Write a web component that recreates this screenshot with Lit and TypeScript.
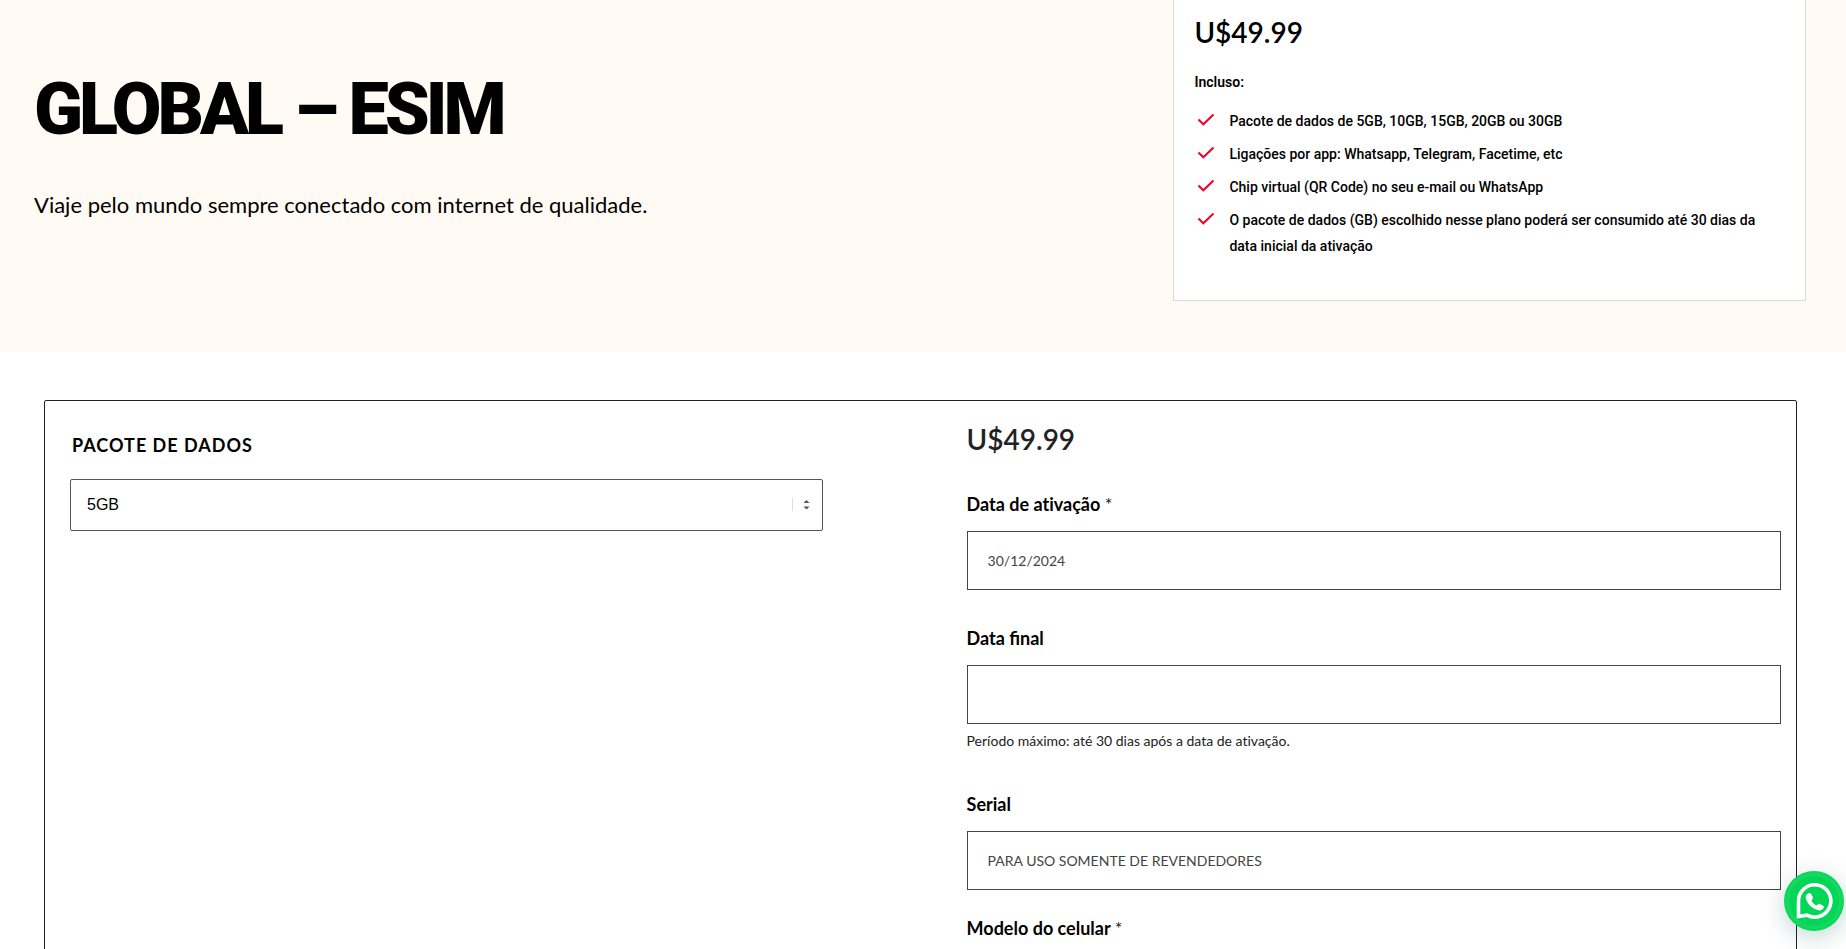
import { LitElement, html, css, nothing } from "lit";
import { customElement, property, state } from "lit/decorators.js";

@customElement("check-list")
class CheckList extends LitElement {
  @property({ attribute: false }) items: string[] = [];

  static styles = css`
    :host { display: block; }
    .list { list-style: none; margin: 0; padding: 0 0 0 3px; display: grid; gap: 7px; }
    .item { display: flex; gap: 14px; font: 500 14px/26px Roboto, sans-serif; color: #000; }
    .icon { flex: none; width: 18px; height: 18px; margin-top: 3px; }
  `;

  render() {
    return html`<ul class="list">
      ${this.items.map((text) => html`<li class="item">
        <svg class="icon" viewBox="0 0 18 18" aria-hidden="true">
          <path d="M1.500 8.500 6.300 13.300 16.500 3.500" fill="none" stroke="#f00027" stroke-width="2" />
        </svg>
        <span>${text}</span>
      </li>`)}
    </ul>`;
  }
}

@customElement("text-field")
class TextField extends LitElement {
  @property() label = "";
  @property() value = "";
  @property() placeholder = "";
  @property() hint = "";
  @property({ type: Boolean }) required = false;

  static styles = css`
    :host { display: block; font-family: Lato, sans-serif; }
    :host([required]) { font-variant-ligatures: none; }
    .label { display: block; font-size: 18px; line-height: 28px; font-weight: 700; color: #000; }
    .mark { font-weight: 400; color: #222; }
    .input {
      display: block; box-sizing: border-box; width: 100%; height: 59px; margin-top: 13px;
      padding: 0 20px; border: 1px solid #444; border-radius: 0; background: #fff;
      font: 400 14px/20px Lato, sans-serif; color: #444; outline: none;
    }
    .input::placeholder { color: #444; opacity: 1; }
    .hint { margin: 6px 0 0; font-size: 14px; line-height: 22px; font-variant-ligatures: none; color: #222; }
  `;

  render() {
    return html`
      <label class="label" for="field">${this.label}${this.required
        ? html` <span class="mark">*</span>` : nothing}</label>
      <input class="input" id="field" type="text" .value=${this.value}
        placeholder=${this.placeholder} ?required=${this.required} />
      ${this.hint ? html`<p class="hint">${this.hint}</p>` : nothing}
    `;
  }
}

@customElement("app-root")
class AppRoot extends LitElement {
  @state() private plan = "5GB";
  private plans = ["5GB", "10GB", "15GB", "20GB", "30GB"];
  private included = [
    "Pacote de dados de 5GB, 10GB, 15GB, 20GB ou 30GB",
    "Ligações por app: Whatsapp, Telegram, Facetime, etc",
    "Chip virtual (QR Code) no seu e-mail ou WhatsApp",
    "O pacote de dados (GB) escolhido nesse plano poderá ser consumido até 30 dias da data inicial da ativação",
  ];

  static styles = css`
    :host { display: block; height: 100vh; overflow: hidden; background: #fff; font-family: Lato, sans-serif; color: #000; }
    .hero { display: flex; justify-content: space-between; padding: 0 40px 50px 34px; background: #fffaf3; }
    .intro { padding-top: 54px; }
    .title { margin: 0; font: 900 72px/112px Roboto, sans-serif; letter-spacing: -4px; }
    .lead { margin: 22px 0 0; font-size: 22px; line-height: 34px; }
    .card {
      box-sizing: border-box; flex: 0 0 35.7%; padding: 12px 40px 41px 20px;
      border: 1px solid #d9d9de; border-top: 0; background: #fff;
    }
    .price { margin: 0; font-size: 28px; line-height: 40px; font-weight: 600; }
    .subtitle { margin: 17px 0 13px; font: 600 14px/26px Roboto, sans-serif; }
    .panel {
      display: grid; grid-template-columns: 44% 47.6%; justify-content: space-between; align-items: start;
      margin: 49px 49px 50px 44px; padding: 18px 15px 40px 25px; border: 1px solid #222; border-radius: 2px;
    }
    .data { padding-top: 12px; }
    .heading { display: block; padding-left: 2px; font-size: 18px; line-height: 28px; font-weight: 700; letter-spacing: 1px; }
    .picker { display: grid; align-items: center; margin-top: 20px; }
    .select {
      grid-area: 1 / 1; appearance: none; width: 100%; height: 52px; padding: 0 16px;
      border: 1px solid #555; border-radius: 2px; background: #fff;
      font: 400 16px/20px "Liberation Sans", sans-serif; color: #000; outline: none;
    }
    .arrows { grid-area: 1 / 1; justify-self: end; width: 18px; height: 14px; margin-right: 13px; pointer-events: none; }
    .order { display: grid; }
    .order .price { color: #222; }
    .first { margin-top: 31px; }
    .next { margin-top: 34px; }
    .after-hint { margin-top: 38px; }
    .last { margin-top: 24px; }
    .chat {
      position: fixed; right: 2px; bottom: 18px; width: 60px; height: 60px; border-radius: 50%;
      background: radial-gradient(circle, #00d757 0 56%, #1fd65f 62%, #00d757 70%);
      box-shadow: 0 6px 24px rgba(7, 94, 84, 0.24);
    }
    .chat-icon { display: block; width: 60px; height: 60px; }
  `;

  private choose(e: Event) {
    this.plan = (e.target as HTMLSelectElement).value;
  }

  render() {
    return html`
      <header class="hero">
        <div class="intro">
          <h1 class="title">GLOBAL – ESIM</h1>
          <p class="lead">Viaje pelo mundo sempre conectado com internet de qualidade.</p>
        </div>
        <aside class="card">
          <p class="price">U$49.99</p>
          <p class="subtitle">Incluso:</p>
          <check-list .items=${this.included}></check-list>
        </aside>
      </header>
      <main class="panel">
        <div class="data">
          <label class="heading" for="plan">PACOTE DE DADOS</label>
          <div class="picker">
            <select class="select" id="plan" @change=${this.choose}>
              ${this.plans.map((p) => html`<option value=${p} ?selected=${p === this.plan}>${p}</option>`)}
            </select>
            <svg class="arrows" viewBox="0 0 18 14" aria-hidden="true">
              <path d="M.5 0v13" stroke="#ddd" />
              <path d="M11.500 5 14.500 2 17.500 5zM11.500 8.500h6L14.500 11.500z" fill="#555" />
            </svg>
          </div>
        </div>
        <div class="order">
          <p class="price">U$49.99</p>
          <text-field class="first" label="Data de ativação" value="30/12/2024" required></text-field>
          <text-field class="next" label="Data final" hint="Período máximo: até 30 dias após a data de ativação."></text-field>
          <text-field class="after-hint" label="Serial" placeholder="PARA USO SOMENTE DE REVENDEDORES"></text-field>
          <text-field class="last" label="Modelo do celular" required></text-field>
        </div>
      </main>
      <a class="chat" href="#whatsapp" aria-label="WhatsApp">
        <svg class="chat-icon" viewBox="0 0 60 60" aria-hidden="true">
          <path d="M14.500 45.500V30A16.200 16.200 0 1 1 23 44.200Z" fill="none" stroke="#fff" stroke-width="3.600" />
          <path d="M23.800 22.400c1.300-.8 2.900-.6 3.500.6l1.500 3.300c.4.900 0 1.700-1.300 3.200 1.300 2.600 2.600 3.900 5.200 5.100 1.300-1.600 2.100-2.100 3.200-1.600l2.900 1.400c1.300.6 1.300 2 .3 3.300-1.600 2-4.300 2.100-7 .9-4.700-1.900-7.800-5.100-9.700-9.600-1.100-2.700-1-5.100 1.400-6.600z" fill="#fff" />
        </svg>
      </a>
    `;
  }
}
